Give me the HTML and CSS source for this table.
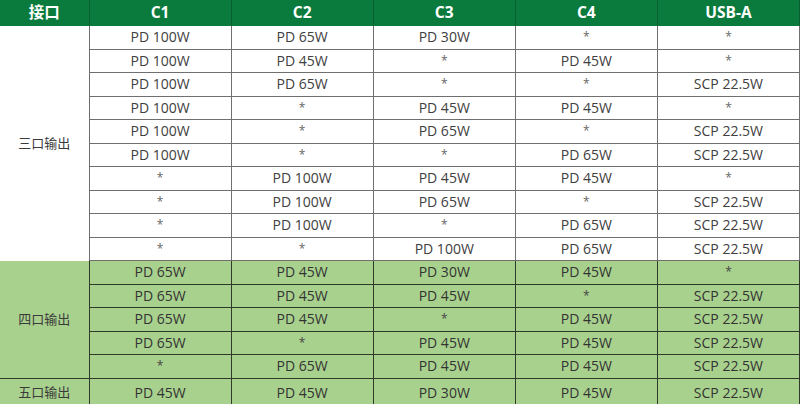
FILE: index.html
```html
<!DOCTYPE html>
<html lang="zh">
<head>
<meta charset="utf-8">
<title>接口输出</title>
<link rel="stylesheet" href="styles.css">
</head>
<body>
<table class="ports">
  <colgroup>
    <col class="c-label"><col class="c-port"><col class="c-port"><col class="c-port"><col class="c-port"><col class="c-port">
  </colgroup>
  <thead>
    <tr class="head">
      <th>接口</th><th>C1</th><th>C2</th><th>C3</th><th>C4</th><th>USB-A</th>
    </tr>
  </thead>
  <tbody class="three">
    <tr><td class="label" rowspan="10">三口输出</td><td>PD 100W</td><td>PD 65W</td><td>PD 30W</td><td class="star">*</td><td class="star">*</td></tr>
    <tr><td>PD 100W</td><td>PD 45W</td><td class="star">*</td><td>PD 45W</td><td class="star">*</td></tr>
    <tr><td>PD 100W</td><td>PD 65W</td><td class="star">*</td><td class="star">*</td><td>SCP 22.5W</td></tr>
    <tr><td>PD 100W</td><td class="star">*</td><td>PD 45W</td><td>PD 45W</td><td class="star">*</td></tr>
    <tr><td>PD 100W</td><td class="star">*</td><td>PD 65W</td><td class="star">*</td><td>SCP 22.5W</td></tr>
    <tr><td>PD 100W</td><td class="star">*</td><td class="star">*</td><td>PD 65W</td><td>SCP 22.5W</td></tr>
    <tr><td class="star">*</td><td>PD 100W</td><td>PD 45W</td><td>PD 45W</td><td class="star">*</td></tr>
    <tr><td class="star">*</td><td>PD 100W</td><td>PD 65W</td><td class="star">*</td><td>SCP 22.5W</td></tr>
    <tr><td class="star">*</td><td>PD 100W</td><td class="star">*</td><td>PD 65W</td><td>SCP 22.5W</td></tr>
    <tr><td class="star">*</td><td class="star">*</td><td>PD 100W</td><td>PD 65W</td><td>SCP 22.5W</td></tr>
  </tbody>
  <tbody class="green">
    <tr class="first"><td class="label" rowspan="5">四口输出</td><td>PD 65W</td><td>PD 45W</td><td>PD 30W</td><td>PD 45W</td><td class="star">*</td></tr>
    <tr><td>PD 65W</td><td>PD 45W</td><td>PD 45W</td><td class="star">*</td><td>SCP 22.5W</td></tr>
    <tr><td>PD 65W</td><td>PD 45W</td><td class="star">*</td><td>PD 45W</td><td>SCP 22.5W</td></tr>
    <tr><td>PD 65W</td><td class="star">*</td><td>PD 45W</td><td>PD 45W</td><td>SCP 22.5W</td></tr>
    <tr><td class="star">*</td><td>PD 65W</td><td>PD 45W</td><td>PD 45W</td><td>SCP 22.5W</td></tr>
  </tbody>
  <tbody class="green five">
    <tr class="last"><td class="label">五口输出</td><td>PD 45W</td><td>PD 45W</td><td>PD 30W</td><td>PD 45W</td><td>SCP 22.5W</td></tr>
  </tbody>
</table>
</body>
</html>
```

FILE: styles.css
```css
html, body {
  margin: 0;
  padding: 0;
  background: #ffffff;
}

.ports {
  width: 800px;
  border-collapse: collapse;
  table-layout: fixed;
  font-family: "Open Sans", "Noto Sans CJK SC", sans-serif;
  font-size: 14px;
  color: #404040;
}

.c-label { width: 89px; }
.c-port { width: 142px; }

.head th {
  height: 26px;
  padding: 0;
  background: #0b7a3d;
  color: #ffffff;
  font-size: 15.5px;
  font-weight: 700;
  text-align: center;
  border-left: 1px solid #0a5f30;
  line-height: 1;
}
.head th:first-child { border-left: none; }
.head th:last-child { border-right: 1px solid #0a5f30; }

.ports td {
  height: 22.5px;
  padding: 0;
  text-align: center;
  vertical-align: middle;
  line-height: 1;
  border: 1px solid #6f6f6f;
}

.three tr:first-child td { border-top: none; }

.ports td.label {
  border-left: none;
  border-top: none;
  border-bottom: none;
  color: #3a3a3a;
  font-size: 13px;
}

.ports td.star {
  color: #666666;
  font-size: 12px;
}

.green td {
  background: #a9d18e;
  color: #333333;
  border-color: #2f3a2b;
}

.green td.star { color: #444444; }

.green tr.first td { border-top-color: #2f3a2b; }
.green tr.first td.label { border-top: none; }

.five td.label {
  border-top: 1px solid #2f3a2b;
}

.five tr.last td {
  height: 26px;
  border-bottom: none;
  padding-top: 3px;
  box-sizing: border-box;
}
```
